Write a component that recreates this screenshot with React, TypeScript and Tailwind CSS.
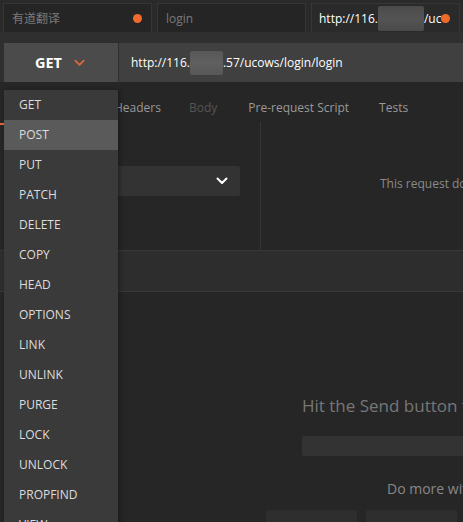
import React from 'react';

const METHODS = ['GET', 'POST', 'PUT', 'PATCH', 'DELETE', 'COPY', 'HEAD', 'OPTIONS', 'LINK', 'UNLINK', 'PURGE', 'LOCK', 'UNLOCK', 'PROPFIND', 'VIEW'];

function Chevron({ className }: { className?: string }) {
  return (
    <svg viewBox="0 0 12 8" className={className} fill="none" stroke="currentColor" strokeWidth="2" strokeLinecap="round" strokeLinejoin="round">
      <path d="M1.5 1.5 6 6l4.5-4.5" />
    </svg>
  );
}

function Blur({ className }: { className: string }) {
  return <span className={'inline-block rounded-[2px] bg-gradient-to-b from-[#4a4a4a] via-[#545454] to-[#4a4a4a] ' + className} />;
}

export default function App() {
  return (
    <div className="relative w-[463px] h-[522px] overflow-hidden bg-[#262626] text-[#ddd]" style={{ fontFamily: '"Open Sans", "Noto Sans CJK SC", sans-serif' }}>
      {/* open tabs */}
      <div className="flex h-[32px] gap-[5px] bg-[#2a2a2a] pl-[3px] pt-[3px]">
        <div className="flex w-[149px] shrink-0 items-center justify-between border border-b-0 border-[#363636] bg-[#252525] pl-[8px] pr-[9px] pt-px">
          <span className="text-[12px] text-[#7a7a7a]">有道翻译</span>
          <span className="h-[9px] w-[9px] rounded-full bg-[#f06a2c]" />
        </div>
        <div className="flex w-[149px] shrink-0 items-center border border-b-0 border-[#363636] bg-[#252525] pl-[8px] pt-px">
          <span className="text-[12px] text-[#7a7a7a]">login</span>
        </div>
        <div className="flex w-[149px] shrink-0 items-center justify-between border border-b-0 border-[#363636] bg-[#2a2a2a] pl-[7px] pr-[9px] pt-px">
          <span className="flex items-center text-[12px] text-white whitespace-nowrap">
            http://116.<Blur className="h-[25px] w-[46px]" />/uc
          </span>
          <span className="h-[9px] w-[9px] rounded-full bg-[#f06a2c]" />
        </div>
      </div>
      <div className="h-[11px] bg-[#2f2f2f]" />

      {/* request line */}
      <div className="flex h-[39px] bg-[#2f2f2f] pl-[4px]">
        <div className="flex w-[114px] shrink-0 items-center justify-center gap-[12px] bg-[#4b4b4b] pr-[2px]">
          <span className="text-[14.5px] font-bold text-white">GET</span>
          <Chevron className="h-[8px] w-[11px] text-[#e2643a]" />
        </div>
        <div className="ml-px flex flex-1 items-center bg-[#404040] pl-[12px] text-[12px] text-white whitespace-nowrap">
          http://116.<Blur className="h-[24px] w-[33px] from-[#575757] via-[#606060] to-[#575757]" />.57/ucows/login/login
        </div>
      </div>

      {/* request tabs */}
      <div className="flex h-[40px] items-center pl-[114px] pt-[12px] text-[12px] text-[#999] whitespace-nowrap">
        <span>Headers</span>
        <span className="ml-[28px] text-[#555]">Body</span>
        <span className="ml-[31px]">Pre-request Script</span>
        <span className="ml-[30px]">Tests</span>
      </div>

      {/* request body */}
      <div className="flex h-[128px]">
        <div className="w-[261px] shrink-0 border-r border-[#353535] pt-[44px]">
          <div className="ml-[100px] flex h-[30px] w-[140px] items-center justify-end rounded-[2px] bg-[#333] pr-[12px]">
            <Chevron className="h-[8px] w-[12px] text-white" />
          </div>
        </div>
        <div className="min-w-0 flex-1 pl-[119px] pt-[53px] text-[12px] text-[#8a8a8a] whitespace-nowrap">This request does not have a body</div>
      </div>

      <div className="h-[42px] border-y border-[#383838] bg-[#2d2d2d]" />

      {/* response */}
      <div className="pl-[302px] whitespace-nowrap">
        <div className="pt-[100px] text-[17px] leading-[28px] text-[#777]">Hit the Send button to get a response.</div>
        <div className="mt-[16px] h-[20px] w-[200px] rounded-[2px] bg-[#333]" />
        <div className="mt-[22px] pl-[85px] text-[14px] text-[#888]">Do more with requests</div>
        <div className="-ml-[36px] mt-[11px] flex gap-[9px]">
          <div className="h-[20px] w-[91px] rounded-[2px] bg-[#2e2e2e]" />
          <div className="h-[20px] w-[91px] rounded-[2px] bg-[#2e2e2e]" />
        </div>
      </div>

      {/* method dropdown */}
      <span className="absolute left-0 top-[123px] h-[2px] w-[4px] bg-[#e2643a]" />
      <ul className="absolute left-[4px] top-[90px] w-[114px] bg-[#3a3a3a] shadow-[2px_0_4px_rgba(0,0,0,0.3)]">
        {METHODS.map((m) => (
          <li key={m} className={'flex h-[30px] items-center pl-[15px] text-[12px] text-[#ddd] ' + (m === 'POST' ? 'bg-[#5a5a5a]' : '')}>
            {m}
          </li>
        ))}
      </ul>
    </div>
  );
}
